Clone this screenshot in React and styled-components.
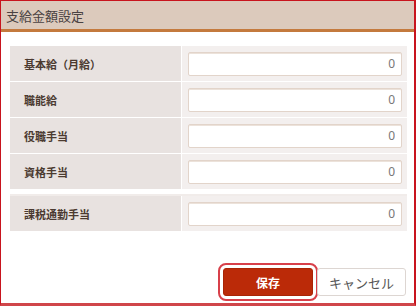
import styled, { createGlobalStyle } from "styled-components";

const GlobalStyle = createGlobalStyle`
  html, body {
    margin: 0;
    padding: 0;
    background: #fff;
  }
  body {
    font-family: "Noto Sans CJK JP", "Noto Sans", sans-serif;
  }
`;

const items = [
  { label: "基本給（月給）", value: "0" },
  { label: "職能給", value: "0" },
  { label: "役職手当", value: "0" },
  { label: "資格手当", value: "0" },
];

function App() {
  return (
    <>
      <GlobalStyle />
      <Dialog>
        <Header>支給金額設定</Header>
        <Body>
          <Table>
            {items.map((item) => (
              <Field key={item.label} label={item.label} value={item.value} />
            ))}
          </Table>
          <Table $separate>
            <Field label="課税通勤手当" value="0" />
          </Table>
          <Actions>
            <SaveButton>保存</SaveButton>
            <CancelButton>キャンセル</CancelButton>
          </Actions>
        </Body>
      </Dialog>
    </>
  );
}

function Field({ label, value }) {
  return (
    <Row>
      <Label>{label}</Label>
      <Cell>
        <Input defaultValue={value} />
      </Cell>
    </Row>
  );
}

const Dialog = styled.div`
  box-sizing: border-box;
  width: 416px;
  height: 306px;
  border: 1px solid #c8141e;
  border-right-width: 2px;
  border-bottom: 3px solid #d0464a;
  display: flex;
  flex-direction: column;
  overflow: hidden;
`;

const Header = styled.div`
  height: 28px;
  background: #dccabc;
  border-bottom: 3px solid #c47a3e;
  padding-left: 5px;
  display: flex;
  align-items: center;
  font-size: 13px;
  color: #4a4242;
`;

const Body = styled.div`
  flex: 1;
  padding: 14px 7px 0 9px;
  display: flex;
  flex-direction: column;
`;

const Table = styled.div`
  display: flex;
  flex-direction: column;
  gap: 1px;
  margin-top: ${(p) => (p.$separate ? "5px" : "0")};
  border-top: ${(p) => (p.$separate ? "2px solid #f1ecea" : "none")};
`;

const Row = styled.div`
  display: flex;
  height: 35px;
  gap: 1px;
`;

const Label = styled.div`
  width: 157px;
  background: #e8e2e0;
  padding-left: 14px;
  display: flex;
  align-items: center;
  font-size: 11px;
  font-weight: bold;
  color: #4b3a30;
`;

const Cell = styled.div`
  flex: 1;
  background: #f3efee;
  padding: 0 5px 0 6px;
  display: flex;
  align-items: center;
`;

const Input = styled.input`
  box-sizing: border-box;
  width: 100%;
  height: 24px;
  border: 1px solid #e2d4ca;
  box-shadow: inset 0 1px 0 #ece2da;
  border-radius: 2px;
  background: #fff;
  text-align: right;
  padding: 0 6px;
  font-family: "Noto Sans", sans-serif;
  font-size: 12px;
  color: #777;
  outline: none;
`;

const Actions = styled.div`
  margin-top: 37px;
  display: flex;
  justify-content: flex-end;
  gap: 4px;
  padding-right: 1px;
`;

const Button = styled.button`
  box-sizing: border-box;
  width: 90px;
  height: 28px;
  border-radius: 3px;
  font-family: "Noto Sans CJK JP", sans-serif;
  font-size: 12px;
  cursor: pointer;
`;

const SaveButton = styled(Button)`
  background: #bb2a08;
  border: 1px solid #a82406;
  color: #fff;
  font-weight: bold;
  outline: 2px solid #d8404a;
  outline-offset: 3px;
`;

const CancelButton = styled(Button)`
  width: 89px;
  background: #fff;
  border: 1px solid #ddd6d2;
  color: #555;
  font-size: 13px;
`;

export default App;
